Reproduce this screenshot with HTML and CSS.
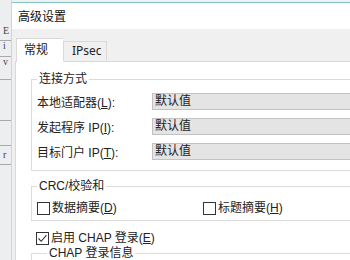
FILE: index.html
```html
<!DOCTYPE html>
<html lang="zh-CN">

<head>
    <meta charset="UTF-8">
    <meta name="viewport" content="width=device-width, initial-scale=1.0">
    <title>高级设置</title>
    <link rel="stylesheet" href="styles.css">
</head>

<body>
    <div class="side-strip">
        <div class="strip-cell strip-top"></div>
        <div class="strip-cell strip-e">E</div>
        <div class="strip-cell strip-i">i</div>
        <div class="strip-cell strip-v">v</div>
        <div class="strip-cell strip-gap"></div>
        <div class="strip-cell strip-blank"></div>
        <div class="strip-cell strip-r">r</div>
    </div>

    <div class="window">
        <div class="titlebar">高级设置</div>

        <div class="dialog-body">
            <div class="tabs">
                <div class="tab tab-active">常规</div>
                <div class="tab">IPsec</div>
            </div>

            <div class="tab-panel">
                <fieldset class="group group-connect">
                    <legend>连接方式</legend>
                    <div class="field-row">
                        <span class="field-label">本地适配器(<u>L</u>):</span>
                        <div class="field-box">默认值</div>
                    </div>
                    <div class="field-row">
                        <span class="field-label">发起程序 IP(<u>I</u>):</span>
                        <div class="field-box">默认值</div>
                    </div>
                    <div class="field-row">
                        <span class="field-label">目标门户 IP(<u>T</u>):</span>
                        <div class="field-box">默认值</div>
                    </div>
                </fieldset>

                <fieldset class="group group-crc">
                    <legend>CRC/校验和</legend>
                    <div class="check-grid">
                        <label class="check">
                            <span class="check-box"></span>
                            <span>数据摘要(<u>D</u>)</span>
                        </label>
                        <label class="check">
                            <span class="check-box"></span>
                            <span>标题摘要(<u>H</u>)</span>
                        </label>
                    </div>
                </fieldset>

                <label class="check check-chap">
                    <span class="check-box">
                        <svg width="11" height="11" viewBox="0 0 11 11">
                            <path d="M1.5 5.5 L4.2 8.3 L9.5 2.2" fill="none" stroke="#333" stroke-width="1.1" />
                        </svg>
                    </span>
                    <span>启用 CHAP 登录(<u>E</u>)</span>
                </label>

                <fieldset class="group group-chap">
                    <legend>CHAP 登录信息</legend>
                    <div class="group-spacer"></div>
                </fieldset>
            </div>
        </div>
    </div>
</body>

</html>
```

FILE: styles.css
```css
body {
    margin: 0;
    padding: 0;
    display: flex;
    width: 520px;
    height: 260px;
    overflow: hidden;
    background-color: #f0f0f0;
    font-family: "Liberation Sans", "Noto Sans CJK SC", sans-serif;
    font-size: 12px;
    color: #222;
}

/* strip of the window behind, on the left */
.side-strip {
    width: 11px;
    flex-shrink: 0;
    background-color: #eceef0;
    border-right: 1px solid #c6d9dd;
}

.strip-cell {
    font-family: "Liberation Serif", serif;
    font-size: 10px;
    line-height: 10px;
    padding-left: 3px;
    color: #444;
    border-bottom: 1px solid #a9a9a9;
}

.strip-top {
    height: 26px;
    border-bottom: none;
}

.strip-e {
    height: 14px;
}

.strip-i {
    height: 15px;
}

.strip-v {
    height: 22px;
}

.strip-gap {
    height: 40px;
}

.strip-blank {
    height: 24px;
}

.strip-r {
    height: 14px;
    padding-top: 4px;
}

.window {
    flex: 1;
    margin-top: 2px;
    border-top: 1px solid #7fc3c6;
    display: flex;
    flex-direction: column;
}

.titlebar {
    height: 27px;
    line-height: 26px;
    padding-left: 6px;
    background-color: #fff;
    font-family: "Noto Sans CJK SC", sans-serif;
    font-size: 12px;
    color: #111;
}

.dialog-body {
    flex: 1;
    padding: 9px 0 0 3px;
    background-color: #f0f0f0;
}

.tabs {
    display: flex;
    align-items: flex-end;
    padding-left: 1px;
}

.tab {
    height: 19px;
    line-height: 18px;
    padding: 0 8px;
    box-sizing: border-box;
    width: 44px;
    border: 1px solid #d9d9d9;
    border-bottom: none;
    background-color: #f0f0f0;
    font-family: "Noto Sans", "Noto Sans CJK SC", sans-serif;
    font-size: 12px;
    margin-bottom: 1px;
}

.tab-active {
    width: 47px;
    height: 24px;
    line-height: 21px;
    padding-left: 7px;
    background-color: #fff;
    border-right: none;
    margin-bottom: -1px;
    position: relative;
    z-index: 1;
}

.tab-panel {
    background-color: #fff;
    border: 1px solid #d9d9d9;
    border-right: none;
    padding: 9px 0 0 15px;
    height: 200px;
}

.group {
    margin: 0;
    border: 1px solid #dcdcdc;
    padding: 6px 0 10px 5px;
    min-width: 0;
}

.group legend {
    padding: 0 2px;
    line-height: 16px;
    font-size: 12px;
}

.field-row {
    display: flex;
    align-items: center;
    height: 17px;
}

.field-row + .field-row {
    margin-top: 8px;
}

.field-label {
    width: 115px;
    flex-shrink: 0;
}

.field-box {
    flex: 1;
    height: 17px;
    line-height: 15px;
    box-sizing: border-box;
    padding-left: 2px;
    background-color: #e4e4e4;
    border: 1px solid #c2c2c2;
    border-right: none;
}

.group-crc {
    margin-top: 7px;
    padding-top: 8px;
    padding-bottom: 5px;
}

.check-grid {
    display: grid;
    grid-template-columns: 166px 1fr;
}

.check {
    display: flex;
    align-items: center;
    gap: 2px;
    height: 13px;
    line-height: 13px;
}

.check-box {
    width: 13px;
    height: 13px;
    box-sizing: border-box;
    border: 1px solid #333;
    background-color: #fff;
    display: flex;
    align-items: center;
    justify-content: center;
    flex-shrink: 0;
}

.check-chap {
    margin: 11px 0 0 5px;
}

.group-chap {
    margin-top: 1px;
    padding-left: 15px;
}

.group-chap legend {
    line-height: 14px;
}

.group-spacer {
    height: 30px;
}
```
